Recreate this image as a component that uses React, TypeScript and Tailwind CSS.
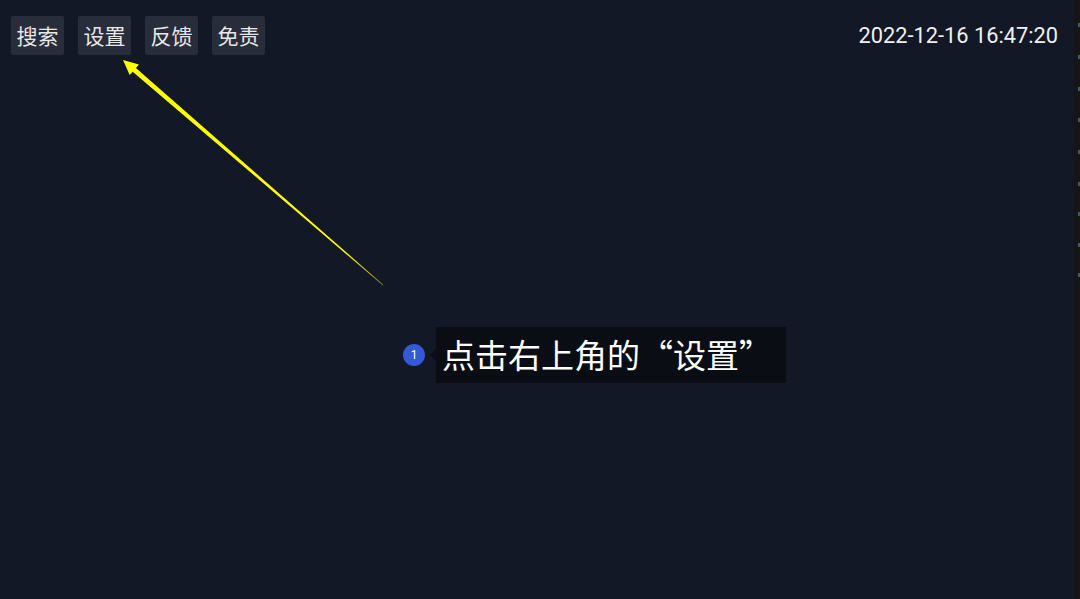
import React from 'react';

const menuItems = ['搜索', '设置', '反馈', '免责'];

// small gray ticks along the right edge strip
const ticks = [23, 55, 87, 118, 150, 182, 212, 243, 273];

function Arrow() {
    return (
        <svg className="absolute left-0 top-0 pointer-events-none" width="1074" height="599" viewBox="0 0 1074 599">
            <defs>
                <linearGradient id="arrowFade" x1="123" y1="60" x2="383" y2="285" gradientUnits="userSpaceOnUse">
                    <stop offset="0" stopColor="#ffff00" />
                    <stop offset="0.85" stopColor="#ffff00" />
                    <stop offset="1" stopColor="#8a8a10" />
                </linearGradient>
            </defs>
            <polygon
                points="123,60 138.9,64.5 135.9,67.9 383.3,284.7 382.7,285.3 132.7,71.7 129.7,75.1"
                fill="url(#arrowFade)"
            />
        </svg>
    );
}

export default function App() {
    return (
        <div lang="zh-CN" className="flex w-[1080px] h-[599px] overflow-hidden">
            <div className="relative flex-1 bg-[#121826]">
                {/* Top bar */}
                <div className="flex items-start justify-between pl-[11px] pr-[16px] pt-[16px]">
                    <div className="flex gap-[14px]">
                        {menuItems.map((item) => (
                            <div
                                key={item}
                                className="flex items-center justify-center w-[53px] h-[39px] rounded-[2px] bg-[#272d3b] text-[21px] text-[#e8e8e8] font-['Noto_Sans_CJK_SC',sans-serif]"
                            >
                                {item}
                            </div>
                        ))}
                    </div>
                    <div className="mt-[6px] text-[21.8px] leading-[28px] text-[#f0f0f0] font-['Roboto',sans-serif]">
                        2022-12-16 16:47:20
                    </div>
                </div>

                <Arrow />

                {/* Step tooltip */}
                <div className="absolute left-[403px] top-[327px] flex items-center">
                    <div className="flex items-center justify-center w-[22px] h-[22px] rounded-full bg-[#3558d4] text-[12px] text-white font-['Roboto',sans-serif]">
                        1
                    </div>
                    <div className="ml-[5px] w-0 h-0 border-y-[6px] border-y-transparent border-r-[6px] border-r-[#0a0d14]" />
                    <div className="flex items-center w-[350px] h-[56px] pl-[6px] bg-[#0a0d14] text-[33px] text-white font-['Noto_Sans_CJK_SC',sans-serif] whitespace-nowrap">
                        点击右上角的“设置”
                    </div>
                </div>
            </div>

            {/* Right edge strip */}
            <div className="relative w-[6px] bg-[#161616]">
                {ticks.map((y) => (
                    <div key={y} className="absolute right-0 w-[2px] h-[4px] bg-[#4a5566]" style={{ top: y }} />
                ))}
            </div>
        </div>
    );
}
